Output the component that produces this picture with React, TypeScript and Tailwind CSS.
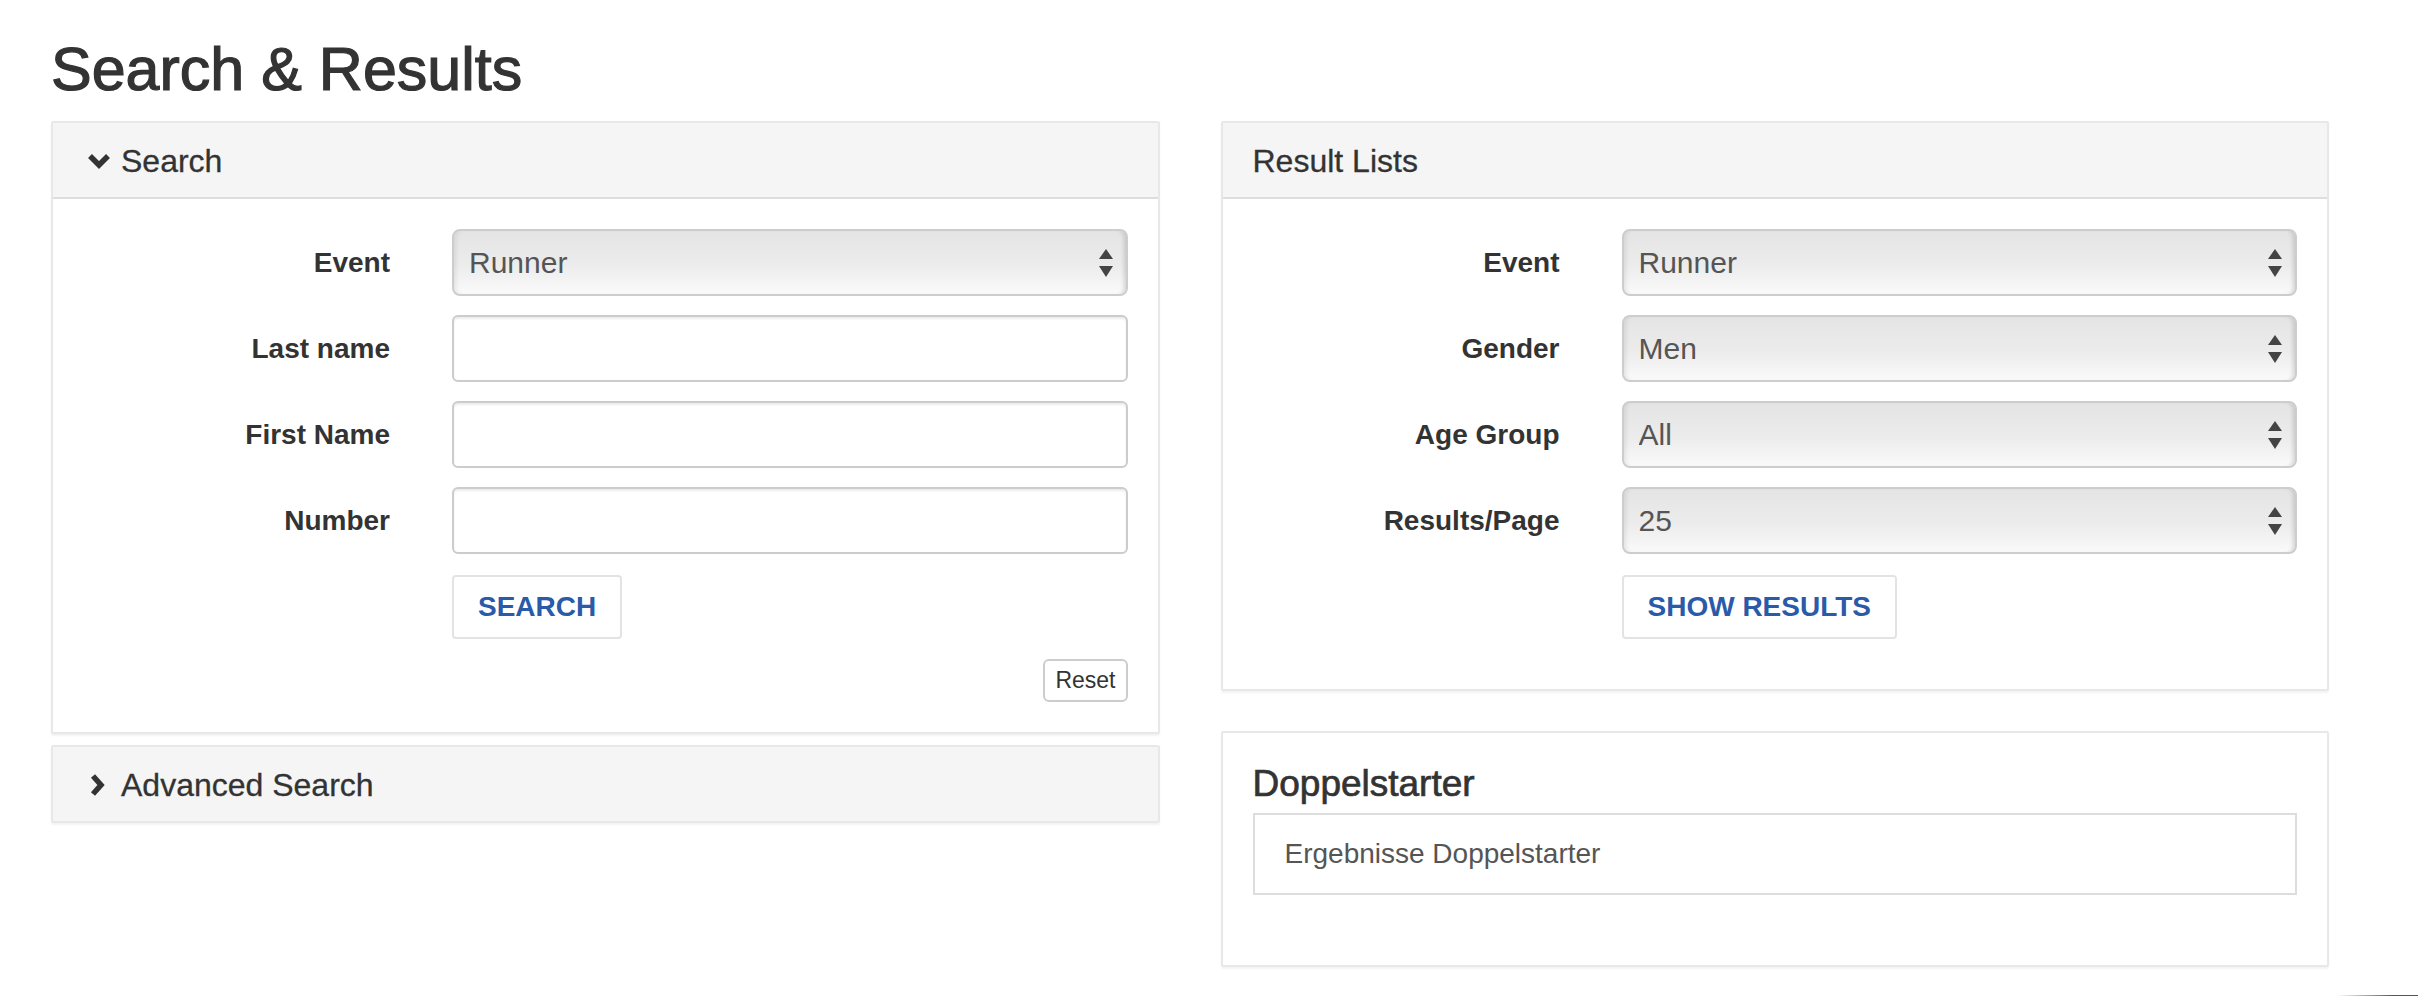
import React from "react";

function ChevronDown() {
  return (
    <svg width="26" height="16" viewBox="0 0 26 16" className="ml-[3px] mr-[9px] shrink-0">
      <polyline points="4,3 13,12 22,3" fill="none" stroke="#333" strokeWidth="5.5" strokeLinejoin="miter" />
    </svg>
  );
}

function ChevronRight() {
  return (
    <svg width="26" height="26" viewBox="0 0 26 26" className="ml-[3px] mr-[9px] shrink-0">
      <polyline points="7,4 15,13 7,22" fill="none" stroke="#333" strokeWidth="5.5" strokeLinejoin="miter" />
    </svg>
  );
}

function SelectBox({ value }: { value: string }) {
  return (
    <div className="relative flex-1">
      <select
        defaultValue={value}
        className="appearance-none w-full h-[67px] rounded-[8px] border-2 border-[#cdcdcd] bg-[linear-gradient(to_bottom,#e4e4e4,#ececec_55%,#fafafa)] pl-[15px] pr-[40px] text-[30px] text-[#555] outline-none shadow-[inset_-5px_0_4px_-3px_rgba(0,0,0,0.14),inset_5px_0_4px_-3px_rgba(0,0,0,0.08)]"
      >
        <option>{value}</option>
      </select>
      <svg width="14" height="28" viewBox="0 0 14 28" className="absolute right-[15px] top-[20px] pointer-events-none">
        <polygon points="0,10 7,0 14,10" fill="#444" />
        <polygon points="0,17 14,17 7,28" fill="#444" />
      </svg>
    </div>
  );
}

function TextField() {
  return (
    <input
      type="text"
      className="flex-1 h-[67px] rounded-[6px] border-2 border-[#cccccc] bg-white px-[24px] text-[28px] text-[#555] outline-none shadow-[inset_0_2px_2px_rgba(0,0,0,0.08)]"
    />
  );
}

function FormRow({ label, children }: { label: string; children: React.ReactNode }) {
  return (
    <div className="flex items-start h-[67px]">
      <label className="w-[307px] shrink-0 text-right font-bold text-[28px] leading-[67px]">{label}</label>
      <div className="ml-[62px] flex flex-1">{children}</div>
    </div>
  );
}

function BlueButton({ children }: { children: React.ReactNode }) {
  return (
    <button className="border-2 border-[#e3e3e3] rounded-[4px] bg-white px-[24px] py-[10px] leading-[40px] text-[28px] font-bold text-[#2a5aa8]">
      {children}
    </button>
  );
}

function PanelHeading({ children }: { children: React.ReactNode }) {
  return (
    <div className="flex items-center bg-[#f5f5f5] px-[30px] pt-[21px] pb-[19px] text-[32px] leading-[34px] [-webkit-text-stroke:0.3px_#333]">
      {children}
    </div>
  );
}

export default function App() {
  return (
    <div className="min-h-screen bg-white font-['Liberation_Sans',Arial,sans-serif] text-[#333]">
      <div className="w-[2329px] pl-[51px]">
        <h1 className="mt-[34px] mb-[17px] text-[61px] leading-[70px] [-webkit-text-stroke:1.2px_#333]">Search &amp; Results</h1>

        <div className="grid grid-cols-2 gap-[61px] items-start">
          {/* left column */}
          <div className="flex flex-col gap-[11px]">
            <div className="border-2 border-[#e8e8e8] rounded-[2px] bg-white shadow-[0_2px_2px_rgba(0,0,0,0.05)]">
              <div className="border-b-2 border-[#dddddd]">
                <PanelHeading>
                  <ChevronDown />
                  <span>Search</span>
                </PanelHeading>
              </div>
              <div className="px-[30px] pt-[30px] pb-[30px] flex flex-col">
                <div className="flex flex-col gap-[19px]">
                  <FormRow label="Event">
                    <SelectBox value="Runner" />
                  </FormRow>
                  <FormRow label="Last name">
                    <TextField />
                  </FormRow>
                  <FormRow label="First Name">
                    <TextField />
                  </FormRow>
                  <FormRow label="Number">
                    <TextField />
                  </FormRow>
                </div>
                <div className="mt-[21px] ml-[369px] flex">
                  <BlueButton>SEARCH</BlueButton>
                </div>
                <div className="mt-[20px] flex justify-end">
                  <button className="h-[43px] border-2 border-[#cccccc] rounded-[6px] bg-white px-[10px] text-[23px] leading-[39px] text-[#333]">
                    Reset
                  </button>
                </div>
              </div>
            </div>

            <div className="border-2 border-[#e8e8e8] rounded-[2px] shadow-[0_2px_2px_rgba(0,0,0,0.05)]">
              <PanelHeading>
                <ChevronRight />
                <span>Advanced Search</span>
              </PanelHeading>
            </div>
          </div>

          {/* right column */}
          <div className="flex flex-col">
            <div className="border-2 border-[#e8e8e8] rounded-[2px] bg-white shadow-[0_2px_2px_rgba(0,0,0,0.05)]">
              <div className="border-b-2 border-[#dddddd]">
                <PanelHeading>
                  <span>Result Lists</span>
                </PanelHeading>
              </div>
              <div className="px-[30px] pt-[30px] pb-[30px] flex flex-col">
                <div className="flex flex-col gap-[19px]">
                  <FormRow label="Event">
                    <SelectBox value="Runner" />
                  </FormRow>
                  <FormRow label="Gender">
                    <SelectBox value="Men" />
                  </FormRow>
                  <FormRow label="Age Group">
                    <SelectBox value="All" />
                  </FormRow>
                  <FormRow label="Results/Page">
                    <SelectBox value="25" />
                  </FormRow>
                </div>
                <div className="mt-[21px] mb-[20px] ml-[369px] flex">
                  <BlueButton>SHOW RESULTS</BlueButton>
                </div>
              </div>
            </div>

            <div className="mt-[40px] border-2 border-[#e8e8e8] rounded-[2px] bg-white shadow-[0_2px_2px_rgba(0,0,0,0.05)] px-[30px] pt-[30px] pb-[70px]">
              <h3 className="text-[37px] leading-[41px] mb-[9px] [-webkit-text-stroke:0.7px_#333]">Doppelstarter</h3>
              <div className="border-2 border-[#dddddd] px-[30px] py-[19px] text-[28px] leading-[40px] text-[#555]">
                Ergebnisse Doppelstarter
              </div>
            </div>
          </div>
        </div>
      </div>

      <div className="mt-[28px] flex justify-end">
        <div className="w-[81px] h-[3px] bg-[linear-gradient(to_right,rgba(42,90,168,0),#2a5aa8_70%)]" />
      </div>
    </div>
  );
}
